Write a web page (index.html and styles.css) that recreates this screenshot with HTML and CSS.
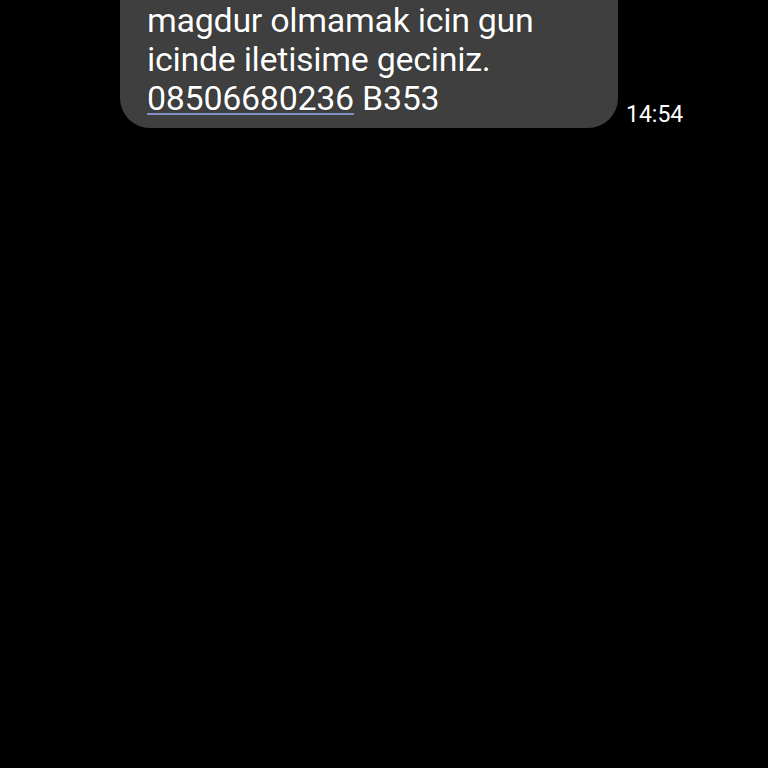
FILE: index.html
```html
<!DOCTYPE html>
<html>
<head>
<meta charset="utf-8">
<link rel="stylesheet" href="styles.css">
</head>
<body>
<div class="thread">
  <div class="row">
    <div class="bubble">
      <p class="msg">magdur olmamak icin gun<br>icinde iletisime geciniz.<br><span class="phone">08506680236</span> B353</p>
    </div>
    <span class="time">14:54</span>
  </div>
</div>
</body>
</html>
```
FILE: styles.css
```css
html, body {
  margin: 0;
  padding: 0;
  background: #000;
  height: 100%;
}
.thread {
  width: 768px;
  height: 768px;
  background: #000;
  overflow: hidden;
}
.row {
  display: flex;
  align-items: flex-end;
  padding-left: 120px;
}
.bubble {
  width: 498px;
  box-sizing: border-box;
  background: #3f3f3f;
  border-radius: 0 0 30px 30px;
  padding: 1px 20px 10px 27px;
}
.msg {
  margin: 0;
  font-family: Roboto, "Noto Sans", sans-serif;
  font-size: 34px;
  line-height: 39px;
  letter-spacing: -0.3px;
  color: #fff;
  text-shadow: 0 0 1px #111;
}
.phone {
  text-decoration: underline;
  text-decoration-color: #8090c4;
  text-decoration-thickness: 2px;
  text-underline-offset: 3px;
}
.time {
  font-family: Roboto, "Noto Sans", sans-serif;
  font-size: 23px;
  color: #fff;
  margin-left: 8px;
  margin-bottom: 0;
}
```
